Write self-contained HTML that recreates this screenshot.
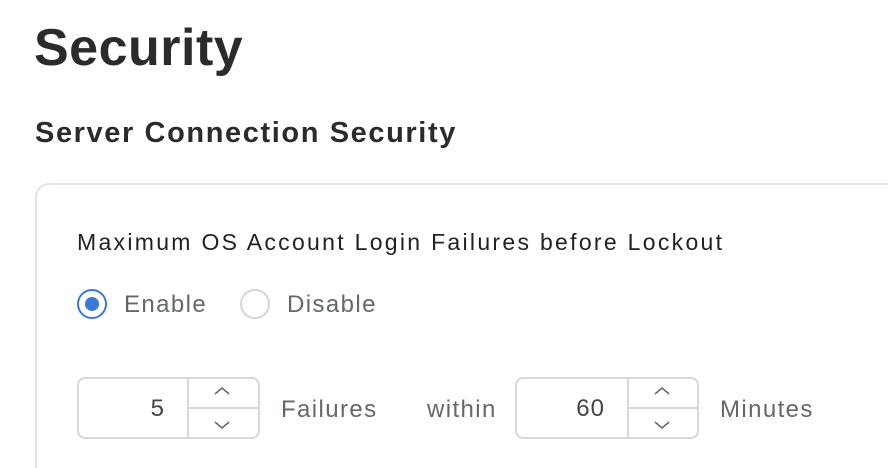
<!DOCTYPE html>
<html><head><style>
html,body{margin:0;width:888px;height:468px;overflow:hidden}
body{background:#fff;font-family:"Liberation Sans",sans-serif;position:relative}
.a{position:absolute;white-space:nowrap}
.h1{left:34px;top:18px;font-size:52px;font-weight:bold;color:#2b2b2b;letter-spacing:0.5px}
.h2{left:35px;top:117px;font-size:29px;font-weight:bold;color:#2b2b2b;letter-spacing:1.6px}
.card{position:absolute;left:35px;top:183px;width:853px;height:285px;border:2px solid #e0e3e8;border-right:none;border-bottom:none;border-radius:14px 0 0 0;box-sizing:border-box}
.lbl{left:77px;top:229px;font-size:23px;color:#222;letter-spacing:2.3px}
.t{font-size:24px;color:#636870;letter-spacing:1.4px}
.radio{position:absolute;width:30px;height:30px;border-radius:50%;box-sizing:border-box}
.spin{position:absolute;top:377px;height:62px;border:2px solid #d6d8dc;border-radius:8px;box-sizing:border-box}
.spin .v{position:absolute;top:16px;font-size:24px;color:#444;text-align:right;letter-spacing:1px}
.spin .d{position:absolute;top:0;bottom:0;width:2px;background:#d6d8dc}
.spin .m{position:absolute;height:2px;top:28px;right:0;background:#d6d8dc}
</style></head><body>
<div class="a h1">Security</div>
<div class="a h2">Server Connection Security</div>
<div class="card"></div>
<div class="a lbl">Maximum OS Account Login Failures before Lockout</div>
<div class="radio" style="left:77px;top:289px;border:2px solid #3d78d8"><div style="position:absolute;left:6px;top:6px;width:14px;height:14px;border-radius:50%;background:#3d78d8"></div></div>
<div class="a t" style="left:124px;top:291px">Enable</div>
<div class="radio" style="left:240px;top:289px;border:2px solid #d3d5d9"></div>
<div class="a t" style="left:287px;top:291px">Disable</div>

<div class="spin" style="left:77px;width:183px">
 <div class="v" style="left:0;width:86px">5</div>
 <div class="d" style="left:108px"></div><div class="m" style="left:108px"></div>
 <svg style="position:absolute;left:108px;top:0" width="71" height="58"><path d="M28 15 L35 9 L42 15" fill="none" stroke="#666" stroke-width="1.5"/><path d="M28 43 L35 49 L42 43" fill="none" stroke="#666" stroke-width="1.5"/></svg>
</div>
<div class="a t" style="left:281px;top:396px">Failures</div>
<div class="a t" style="left:427px;top:396px">within</div>
<div class="spin" style="left:515px;width:184px">
 <div class="v" style="left:0;width:88px">60</div>
 <div class="d" style="left:110px"></div><div class="m" style="left:110px"></div>
 <svg style="position:absolute;left:110px;top:0" width="70" height="58"><path d="M28 15 L35 9 L42 15" fill="none" stroke="#666" stroke-width="1.5"/><path d="M28 43 L35 49 L42 43" fill="none" stroke="#666" stroke-width="1.5"/></svg>
</div>
<div class="a t" style="left:720px;top:396px">Minutes</div>
</body></html>
